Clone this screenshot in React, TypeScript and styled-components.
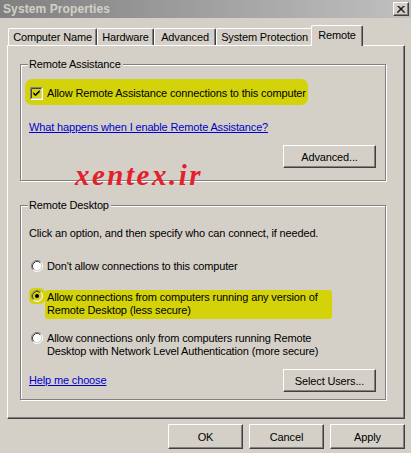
import styled, { createGlobalStyle } from 'styled-components';

const GlobalStyle = createGlobalStyle`
  html, body {
    margin: 0;
    padding: 0;
    background: #d4d0c8;
  }
  body {
    font-family: "Liberation Sans", Arial, sans-serif;
    font-size: 11px;
    letter-spacing: -0.15px;
    color: #000;
  }
  * {
    box-sizing: border-box;
  }
`;

const tabs = [
  { label: 'Computer Name', width: 89 },
  { label: 'Hardware', width: 57 },
  { label: 'Advanced', width: 62 },
  { label: 'System Protection', width: 97 },
  { label: 'Remote', width: 52, active: true },
];

const HIGHLIGHT = '#d4d30a';

const RadioIcon = ({ checked, fill = '#fff' }: { checked?: boolean; fill?: string }) => (
  <svg width="12" height="12" viewBox="0 0 12 12">
    <circle cx="6" cy="6" r="4.5" fill={fill} />
    <path d="M2.11 9.89 A5.5 5.5 0 0 1 9.89 2.11" stroke="#808080" fill="none" />
    <path d="M9.89 2.11 A5.5 5.5 0 0 1 2.11 9.89" stroke="#fff" fill="none" />
    <path d="M2.82 9.18 A4.5 4.5 0 0 1 9.18 2.82" stroke="#404040" fill="none" />
    <path d="M9.18 2.82 A4.5 4.5 0 0 1 2.82 9.18" stroke="#d4d0c8" fill="none" />
    {checked && <circle cx="6" cy="6" r="2" fill="#000" />}
  </svg>
);

const CheckIcon = ({ fill = '#fff' }: { fill?: string }) => (
  <svg width="13" height="13" viewBox="0 0 13 13">
    <rect x="0" y="0" width="13" height="13" fill="#fff" />
    <path d="M0.5 12.5 V0.5 H12.5" stroke="#808080" fill="none" />
    <path d="M1.5 11.5 V1.5 H11.5" stroke="#404040" fill="none" />
    <path d="M1.5 11.5 H11.5 V1.5" stroke="#d4d0c8" fill="none" />
    <rect x="2" y="2" width="9" height="9" fill={fill} />
    <path d="M3.5 5.5 L5.5 7.5 L9.5 3.5 M3.5 6.8 L5.5 8.8 L9.5 4.8 M3.5 6.2 L5.5 8.2 L9.5 4.2" stroke="#000" strokeWidth="1" fill="none" />
  </svg>
);

const CloseGlyph = () => (
  <svg width="8" height="7" viewBox="0 0 8 7">
    <path d="M0.5 0 L7.5 7 M1.5 0 L8 6.5 M7.5 0 L0.5 7 M6.5 0 L0 6.5" stroke="#000" strokeWidth="1" fill="none" />
  </svg>
);

export default function App() {
  return (
    <>
      <GlobalStyle />
      <Window>
        <TitleBar>
          <Title>System Properties</Title>
          <CloseButton>
            <CloseGlyph />
          </CloseButton>
        </TitleBar>

        <Content>
          <TabStrip>
            {tabs.map((t) => (
              <Tab key={t.label} $width={t.width} $active={!!t.active}>
                {t.label}
              </Tab>
            ))}
          </TabStrip>

          <Panel>
            <Group $height={117}>
              <Legend>Remote Assistance</Legend>
              <GroupBody $top={22}>
                <CheckHighlight>
                  <OptionRow>
                    <CheckIcon fill={HIGHLIGHT} />
                    <span>Allow Remote Assistance connections to this computer</span>
                  </OptionRow>
                </CheckHighlight>
                <Link $top={21}>What happens when I enable Remote Assistance?</Link>
                <ButtonRow $top={11}>
                  <Button $width={93} $height={23}>Advanced...</Button>
                </ButtonRow>
              </GroupBody>
              <Watermark>xentex.ir</Watermark>
            </Group>

            <Group $height={195}>
              <Legend>Remote Desktop</Legend>
              <GroupBody $top={21}>
                <Text>Click an option, and then specify who can connect, if needed.</Text>
                <OptionRow $top={20} $indent={2}>
                  <RadioIcon />
                  <span>Don't allow connections to this computer</span>
                </OptionRow>
                <OptionRow $top={17} $indent={2}>
                  <RadioMark>
                    <RadioIcon checked fill={HIGHLIGHT} />
                  </RadioMark>
                  <Marked>
                    Allow connections from computers running any version of
                    <br />
                    Remote Desktop (less secure)
                  </Marked>
                </OptionRow>
                <OptionRow $top={13} $indent={2}>
                  <RadioIcon />
                  <span>
                    Allow connections only from computers running Remote
                    <br />
                    Desktop with Network Level Authentication (more secure)
                  </span>
                </OptionRow>
                <ButtonRow $top={11} $spread>
                  <Link>Help me choose</Link>
                  <Button $width={93} $height={23}>Select Users...</Button>
                </ButtonRow>
              </GroupBody>
            </Group>
          </Panel>

          <Footer>
            <Button $width={75} $height={25}>OK</Button>
            <Button $width={75} $height={25}>Cancel</Button>
            <Button $width={75} $height={25}>Apply</Button>
          </Footer>
        </Content>
      </Window>
    </>
  );
}

const Window = styled.div`
  width: 411px;
  height: 453px;
  overflow: hidden;
  background: #d4d0c8;
  display: flex;
  flex-direction: column;
`;

const TitleBar = styled.div`
  height: 18px;
  display: flex;
  align-items: center;
  justify-content: space-between;
  padding: 0 2px 0 3px;
  background: linear-gradient(to right, #808080, #c0c0c0);
`;

const Title = styled.span`
  font-size: 12px;
  font-weight: bold;
  color: #d4d0c8;
  letter-spacing: 0.1px;
`;

const CloseButton = styled.div`
  width: 16px;
  height: 14px;
  display: flex;
  align-items: center;
  justify-content: center;
  background: #d4d0c8;
  border: 1px solid;
  border-color: #fff #404040 #404040 #fff;
  box-shadow: inset -1px -1px 0 #808080;
`;

const Content = styled.div`
  padding: 7px 6px 0 7px;
  display: flex;
  flex-direction: column;
`;

const TabStrip = styled.div`
  height: 20px;
  display: flex;
  align-items: flex-end;
  padding-left: 1px;
`;

const Tab = styled.div<{ $width: number; $active: boolean }>`
  width: ${(p) => p.$width}px;
  height: ${(p) => (p.$active ? 21 : 17)}px;
  display: flex;
  align-items: center;
  justify-content: center;
  padding-bottom: ${(p) => (p.$active ? 3 : 0)}px;
  background: #d4d0c8;
  border-top: 1px solid #fff;
  border-left: 1px solid #fff;
  border-right: 1px solid #404040;
  border-radius: 2px 2px 0 0;
  box-shadow: inset -1px 0 0 #808080;
  white-space: nowrap;
  ${(p) =>
    p.$active &&
    `
    position: relative;
    z-index: 1;
    margin: 0 -2px -1px -2px;
  `}
`;

const Panel = styled.div`
  width: 398px;
  height: 374px;
  border-top: 1px solid #fff;
  border-left: 1px solid #fff;
  border-right: 1px solid #404040;
  border-bottom: 1px solid #404040;
  box-shadow: inset -1px -1px 0 #808080;
  padding: 18px 0 0 12px;
  display: flex;
  flex-direction: column;
  gap: 24px;
`;

const Group = styled.div<{ $height: number }>`
  position: relative;
  width: 366px;
  height: ${(p) => p.$height}px;
  border: 1px solid #808080;
  box-shadow: inset 1px 1px 0 #fff, 1px 1px 0 #fff;
`;

const Legend = styled.span`
  position: absolute;
  top: -7px;
  left: 7px;
  padding: 0 2px 0 1px;
  line-height: 13px;
  background: #d4d0c8;
`;

const GroupBody = styled.div<{ $top: number }>`
  display: flex;
  flex-direction: column;
  align-items: flex-start;
  padding: ${(p) => p.$top}px 9px 0 8px;
`;

const Text = styled.div`
  line-height: 13px;
  white-space: nowrap;
`;

const OptionRow = styled.div<{ $top?: number; $indent?: number }>`
  display: flex;
  align-items: flex-start;
  gap: 4px;
  margin-top: ${(p) => p.$top ?? 0}px;
  padding-left: ${(p) => p.$indent ?? 1}px;
  line-height: 13px;
  white-space: nowrap;

  & > svg {
    flex: none;
  }
`;

const CheckHighlight = styled.div`
  background: ${HIGHLIGHT};
  border-radius: 7px;
  padding: 8px 2px 5px 4px;
  margin: -8px -2px -5px -4px;
`;

const RadioMark = styled.span`
  display: flex;
  background: ${HIGHLIGHT};
  border-radius: 5px;
  padding: 2px;
  margin: -2px -2px 0 -2px;
`;

const Marked = styled.span`
  background: ${HIGHLIGHT};
  padding: 1px 14px 2px 2px;
  margin-left: -2px;
  border-radius: 3px;
  box-decoration-break: clone;
  -webkit-box-decoration-break: clone;
`;

const Link = styled.span<{ $top?: number }>`
  margin-top: ${(p) => p.$top ?? 0}px;
  line-height: 13px;
  color: #0000cc;
  text-decoration: underline;
  white-space: nowrap;
`;

const ButtonRow = styled.div<{ $top: number; $spread?: boolean }>`
  align-self: stretch;
  display: flex;
  align-items: center;
  justify-content: ${(p) => (p.$spread ? 'space-between' : 'flex-end')};
  margin-top: ${(p) => p.$top}px;
`;

const Button = styled.div<{ $width: number; $height: number }>`
  width: ${(p) => p.$width}px;
  height: ${(p) => p.$height}px;
  display: flex;
  align-items: center;
  justify-content: center;
  background: #d4d0c8;
  border: 1px solid;
  border-color: #fff #404040 #404040 #fff;
  box-shadow: inset -1px -1px 0 #808080;
  white-space: nowrap;
`;

const Watermark = styled.span`
  position: absolute;
  left: 54px;
  bottom: -10px;
  font-family: "Liberation Serif", "Times New Roman", serif;
  font-size: 29px;
  font-weight: bold;
  font-style: italic;
  letter-spacing: 2.5px;
  line-height: 30px;
  color: #e3202b;
`;

const Footer = styled.div`
  display: flex;
  justify-content: flex-end;
  gap: 6px;
  margin-top: 5px;
`;
